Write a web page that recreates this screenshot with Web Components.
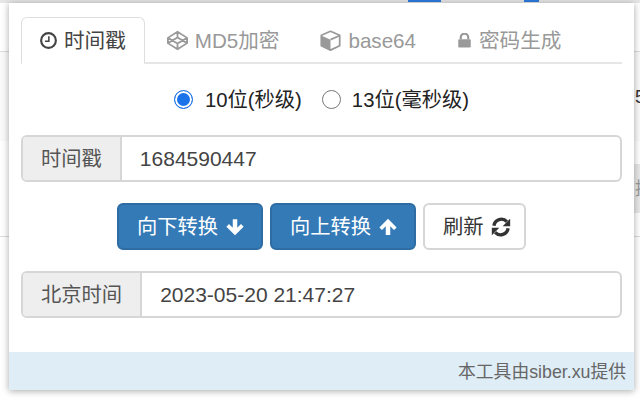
<!DOCTYPE html>
<html lang="zh">
<head>
<meta charset="utf-8">
<title>时间戳工具</title>
<style>
    html, body { margin: 0; height: 100%; overflow: hidden; }
    body {
        font: 20.300px/28px "Liberation Sans", "Noto Sans CJK SC", sans-serif;
        color: #333;
        background: #fff;
    }
</style>
</head>
<body>
<back-page></back-page>
<tool-popup>
    <tab-bar>
        <tab-item active><fa-icon name="clock" size="17"></fa-icon>时间戳</tab-item>
        <tab-item><fa-icon name="codepen" size="21"></fa-icon>MD5加密</tab-item>
        <tab-item><fa-icon name="cube" size="21"></fa-icon>base64</tab-item>
        <tab-item><fa-icon name="lock" size="15"></fa-icon>密码生成</tab-item>
    </tab-bar>
    <radio-row>
        <radio-option checked>10位(秒级)</radio-option>
        <radio-option>13位(毫秒级)</radio-option>
    </radio-row>
    <addon-field label="时间戳">1684590447</addon-field>
    <button-row>
        <action-button primary>向下转换 <fa-icon name="down" size="18"></fa-icon></action-button>
        <action-button primary>向上转换 <fa-icon name="up" size="18"></fa-icon></action-button>
        <action-button>刷新 <fa-icon name="refresh" size="20"></fa-icon></action-button>
    </button-row>
    <addon-field label="北京时间">2023-05-20 21:47:27</addon-field>
    <span slot="footer">本工具由siber.xu提供</span>
</tool-popup>

<script>
const ICONS = {
    clock: `<circle cx="12" cy="12" r="10.400" fill="none" stroke="currentColor" stroke-width="3"/><path d="M12.500 6v7H7" fill="none" stroke="currentColor" stroke-width="2.200"/>`,
    codepen: `<path d="M12 2 23 9v6l-11 7L1 15V9Zm0 0v6.500M12 15.500V22M1 9l11 6.500L23 9M1 15l11-6.500L23 15" fill="none" stroke="currentColor" stroke-width="2" stroke-linejoin="round"/>`,
    cube: `<path d="M12 1.500 22.500 6v12L12 23 1.500 18V6Z" fill="none" stroke="currentColor" stroke-width="2" stroke-linejoin="round"/><path d="M2 6.500 12 11v12l-10-5Z" fill="currentColor"/><path d="M12 11l10-4.500" stroke="currentColor" stroke-width="2"/>`,
    lock: `<path d="M6 10V7a6 6 0 0 1 12 0v3" fill="none" stroke="currentColor" stroke-width="3.500"/><rect x="2" y="10" width="20" height="13" rx="2" fill="currentColor"/>`,
    down: `<path d="M12 23 .5 11.500 4 8l5 5V1.500h6V13l5-5 3.500 3.500Z" fill="currentColor"/>`,
    up: `<path d="M12 1 23.500 12.500 20 16l-5-5v11.500H9V11l-5 5-3.500-3.500Z" fill="currentColor"/>`,
    refresh: `<path d="M3.500 10.500a9 9 0 0 1 15.500-5" fill="none" stroke="currentColor" stroke-width="4"/><path d="M23 2v9h-9Z" fill="currentColor"/><path d="M20.500 13.500a9 9 0 0 1-15.500 5" fill="none" stroke="currentColor" stroke-width="4"/><path d="M1 22v-9h9Z" fill="currentColor"/>`
};

class FaIcon extends HTMLElement {
    constructor() {
        super();
        const size = this.getAttribute("size") || 18;
        const shadow = this.attachShadow({mode: "open"});
        shadow.innerHTML = `
            <style>
                :host { display: inline-flex; vertical-align: -2px; }
                svg { width: ${size}px; height: ${size}px; display: block; }
            </style>
            <svg viewBox="0 0 24 24">${ICONS[this.getAttribute("name")]}</svg>
        `;
    }
}

class BackPage extends HTMLElement {
    constructor() {
        super();
        this.attachShadow({mode: "open"}).innerHTML = `
            <style>
                :host { position: absolute; inset: 0; display: block; background: #fff; overflow: hidden; }
                .top { position: absolute; left: 0; right: 0; top: 0; height: 3px; background: #e6e6e6; }
                .mark { position: absolute; top: 0; height: 2px; background: #2b7be0; }
                .rule { position: absolute; left: 0; right: 0; height: 1px; background: #dcdcdc; }
                .band { position: absolute; right: 0; top: 164px; width: 6px; height: 49px; background: #e8e8e8; }
                .soft { position: absolute; left: 0; right: 0; top: 52px; height: 89px; background: #fafafa; }
                .txt { position: absolute; left: 635px; font-size: 18px; color: #333; }
            </style>
            <div class="top"></div>
            <div class="mark" style="left:408px;width:33px"></div>
            <div class="mark" style="left:524px;width:15px"></div>
            <div class="soft"></div>
            <div class="rule" style="top:51px"></div>
            <div class="rule" style="top:236px"></div>
            <div class="band"></div>
            <div class="txt" style="top:83px">5</div>
            <div class="txt" style="top:175px;color:#999">提</div>
        `;
    }
}

class ToolPopup extends HTMLElement {
    constructor() {
        super();
        this.attachShadow({mode: "open"}).innerHTML = `
            <style>
                :host {
                    position: absolute;
                    left: 9px; top: 3px;
                    width: 625px; height: 387px;
                    display: flex;
                    flex-direction: column;
                    background: #fff;
                    box-shadow: 0 1px 7px rgba(0,0,0,.35);
                }
                .body { flex: 1; padding: 14px 12px 0; display: flex; flex-direction: column; }
                footer {
                    height: 38px;
                    box-sizing: border-box;
                    padding: 6px 8px 0 0;
                    background: #deedf6;
                    text-align: right;
                    font-size: 17.800px;
                    line-height: 28px;
                    color: #666;
                }
            </style>
            <div class="body"><slot></slot></div>
            <footer><slot name="footer"></slot></footer>
        `;
    }
}

class TabBar extends HTMLElement {
    constructor() {
        super();
        this.attachShadow({mode: "open"}).innerHTML = `
            <style>
                :host { display: flex; gap: 3px; height: 47px; box-sizing: border-box; border-bottom: 2px solid #e6e6e6; }
            </style>
            <slot></slot>
        `;
    }
}

class TabItem extends HTMLElement {
    constructor() {
        super();
        this.attachShadow({mode: "open"}).innerHTML = `
            <style>
                :host {
                    display: flex;
                    align-items: center;
                    gap: 7px;
                    height: 47px;
                    box-sizing: border-box;
                    padding: 0 18px;
                    font-size: 20.600px;
                    color: #999;
                    border-radius: 6px 6px 0 0;
                    border: 1px solid transparent;
                }
                :host([active]) {
                    color: #444;
                    background: #fff;
                    border-color: #dedede;
                    border-bottom-color: #fff;
                }
            </style>
            <slot></slot>
        `;
    }
}

class RadioRow extends HTMLElement {
    constructor() {
        super();
        this.attachShadow({mode: "open"}).innerHTML = `
            <style>
                :host { display: flex; justify-content: center; gap: 20px; height: 71px; align-items: center; color: #222; }
            </style>
            <slot></slot>
        `;
    }
}

class RadioOption extends HTMLElement {
    constructor() {
        super();
        this.attachShadow({mode: "open"}).innerHTML = `
            <style>
                :host { display: flex; align-items: center; gap: 11px; }
                :host([checked]) { gap: 12px; }
                i {
                    width: 19px; height: 19px;
                    box-sizing: border-box;
                    border: 1.600px solid #767676;
                    border-radius: 50%;
                    background: #fff;
                }
                :host([checked]) i {
                    border-color: #1a73e8;
                    background: #1a73e8;
                    box-shadow: inset 0 0 0 2px #fff;
                }
            </style>
            <i></i><span><slot></slot></span>
        `;
    }
}

class AddonField extends HTMLElement {
    constructor() {
        super();
        this.attachShadow({mode: "open"}).innerHTML = `
            <style>
                :host {
                    display: flex;
                    height: 47px;
                    box-sizing: border-box;
                    border: 2px solid #d6d6d6;
                    border-radius: 6px;
                    background: #fff;
                    overflow: hidden;
                }
                .label {
                    background: #eee;
                    color: #555;
                    padding: 0 18px;
                    display: flex;
                    align-items: center;
                    border-right: 2px solid #d6d6d6;
                }
                .value { padding-left: 18px; display: flex; align-items: center; color: #444; font-size: 21px; }
            </style>
            <div class="label">${this.getAttribute("label")}</div>
            <div class="value"><slot></slot></div>
        `;
    }
}

class ButtonRow extends HTMLElement {
    constructor() {
        super();
        this.attachShadow({mode: "open"}).innerHTML = `
            <style>
                :host { display: flex; justify-content: center; gap: 7px; margin: 21px 0; }
            </style>
            <slot></slot>
        `;
    }
}

class ActionButton extends HTMLElement {
    constructor() {
        super();
        this.attachShadow({mode: "open"}).innerHTML = `
            <style>
                :host {
                    display: flex;
                    align-items: center;
                    width: 103px;
                    height: 47px;
                    box-sizing: border-box;
                    padding-left: 18px;
                    gap: 7px;
                    border: 2px solid #d6d6d6;
                    border-radius: 6px;
                    background: #fff;
                    color: #333;
                }
                :host([primary]) {
                    width: 146px;
                    gap: 8px;
                    background: #337ab7;
                    border-color: #2e6da4;
                    color: #fff;
                }
            </style>
            <slot></slot>
        `;
    }
}

customElements.define("fa-icon", FaIcon);
customElements.define("back-page", BackPage);
customElements.define("tool-popup", ToolPopup);
customElements.define("tab-bar", TabBar);
customElements.define("tab-item", TabItem);
customElements.define("radio-row", RadioRow);
customElements.define("radio-option", RadioOption);
customElements.define("addon-field", AddonField);
customElements.define("button-row", ButtonRow);
customElements.define("action-button", ActionButton);
</script>
</body>
</html>
